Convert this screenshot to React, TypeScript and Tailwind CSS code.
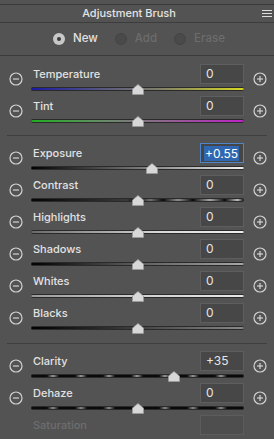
import React from "react"

type Row = {
  label: string
  value: string
  pos: number
  track: string
  selected?: boolean
}

const section1: Row[] = [
  { label: "Temperature", value: "0", pos: 50, track: "bg-[linear-gradient(90deg,#1a1aa6,#5a5a80_35%,#80806a_60%,#d8d820)]" },
  { label: "Tint", value: "0", pos: 50, track: "bg-[linear-gradient(90deg,#1fae1f,#6a8a6a_35%,#8a6a8a_60%,#c020c8)]" },
]

const section2: Row[] = [
  { label: "Exposure", value: "+0.55", pos: 57, track: "bg-[linear-gradient(90deg,#000,#777_50%,#f2f2f2)]", selected: true },
  { label: "Contrast", value: "0", pos: 50, track: "bg-[linear-gradient(90deg,#050505,#3a3a3a_45%,#0a0a0a_50%,#707070_56%,#0a0a0a_62%,#909090_69%,#0a0a0a_76%,#aaaaaa_84%,#0a0a0a_91%,#c0c0c0_97%,#0a0a0a)]" },
  { label: "Highlights", value: "0", pos: 50, track: "bg-[linear-gradient(90deg,#6a6a6a,#d8d8d8_60%,#f0f0f0)]" },
  { label: "Shadows", value: "0", pos: 50, track: "bg-[linear-gradient(90deg,#000,#555_45%,#a8a8a8)]" },
  { label: "Whites", value: "0", pos: 50, track: "bg-[linear-gradient(90deg,#9a9a9a,#d0d0d0_50%,#e8e8e8)]" },
  { label: "Blacks", value: "0", pos: 50, track: "bg-[linear-gradient(90deg,#000,#333_40%,#8a8a8a)]" },
]

const section3: Row[] = [
  { label: "Clarity", value: "+35", pos: 67, track: "bg-[repeating-linear-gradient(90deg,#0a0a0a_0px,#0a0a0a_16px,#9a9a9a_22px,#0a0a0a_28px)]" },
  { label: "Dehaze", value: "0", pos: 50, track: "bg-[repeating-linear-gradient(90deg,#0a0a0a_0px,#0a0a0a_16px,#8a8a8a_22px,#0a0a0a_28px)]" },
]

function CircleIcon({ plus }: { plus?: boolean }) {
  return (
    <svg width="14" height="14" viewBox="0 0 14 14" fill="none" stroke="#d2d2d2" strokeWidth="1.2">
      <circle cx="7" cy="7" r="6" />
      <line x1="4" y1="7" x2="10" y2="7" />
      {plus && <line x1="7" y1="4" x2="7" y2="10" />}
    </svg>
  )
}

function Thumb() {
  return (
    <svg width="12" height="11" viewBox="0 0 12 11">
      <path d="M6 0.5 L11.5 5 L11.5 10.5 L0.5 10.5 L0.5 5 Z" fill="#d8d8d8" stroke="#9a9a9a" strokeWidth="0.8" strokeLinejoin="round" />
    </svg>
  )
}

function SliderRow({ row }: { row: Row }) {
  return (
    <div className="flex h-[32px] items-start">
      <div className="flex w-[31px] justify-center pl-[1px] pt-[8px]">
        <CircleIcon />
      </div>
      <div className="flex w-[213px] flex-col">
        <div className="flex h-[20px] items-center justify-between">
          <span className="pl-[2px] pt-[1px] text-[11px] font-medium text-[#e2e2e2]">{row.label}</span>
          {row.selected ? (
            <div className="flex h-[20px] w-[44px] items-center border border-[#4f86c8] bg-[#454545] pl-[3px]">
              <span className="bg-[#2f68b0] px-[1px] leading-[15px] text-[12px] text-white">{row.value}</span>
            </div>
          ) : (
            <div className="flex h-[20px] w-[44px] items-center border border-[#5e5e5e] bg-[#474747] pl-[5px] text-[12px] text-[#e6e6e6]">
              {row.value}
            </div>
          )}
        </div>
        <div className="relative h-[12px]">
          <div className={`mt-[3px] h-[4px] w-full rounded-[2px] border-y border-[#2a2a2a] ${row.track}`} />
          <div className="absolute top-[0px] -translate-x-1/2" style={{ left: `${row.pos}%` }}>
            <Thumb />
          </div>
        </div>
      </div>
      <div className="flex flex-1 justify-center pl-[2px] pt-[8px]">
        <CircleIcon plus />
      </div>
    </div>
  )
}

function Radio({ label, active }: { label: string; active?: boolean }) {
  return (
    <div className="flex items-center gap-[8px]">
      {active ? (
        <span className="flex h-[12px] w-[12px] items-center justify-center rounded-full bg-[#c8c8c8]">
          <span className="h-[4px] w-[4px] rounded-full bg-[#3a3a3a]" />
        </span>
      ) : (
        <span className="h-[12px] w-[12px] rounded-full border border-[#444] bg-[#4a4a4a]" />
      )}
      <span className={`text-[11.5px] font-medium ${active ? "text-[#e2e2e2]" : "text-[#6c6c6c]"}`}>{label}</span>
    </div>
  )
}

export default function App() {
  return (
    <div
      className="h-[439px] w-[274px] overflow-hidden bg-[#535353]"
      style={{ fontFamily: "Inter, 'Liberation Sans', sans-serif" }}
    >
      <div className="h-[4px]" />
      <div className="h-px bg-[#3c3c3c]" />
      <div className="relative flex h-[17px] items-center justify-center pr-[16px]">
        <span className="text-[11px] font-medium text-[#e4e4e4]">Adjustment Brush</span>
        <div className="absolute right-[2px] top-[5px] flex flex-col gap-[2px]">
          <span className="h-px w-[10px] bg-[#dcdcdc]" />
          <span className="h-px w-[10px] bg-[#dcdcdc]" />
          <span className="h-px w-[10px] bg-[#dcdcdc]" />
        </div>
      </div>
      <div className="h-px bg-[#3c3c3c]" />
      <div className="flex h-[32px] items-center gap-[17px] pl-[53px]">
        <Radio label="New" active />
        <Radio label="Add" />
        <Radio label="Erase" />
      </div>
      <div className="h-px bg-[#3c3c3c]" />

      <div className="pb-[7px] pt-[8px]">
        {section1.map((r) => (
          <SliderRow key={r.label} row={r} />
        ))}
      </div>
      <div className="mx-[7px] h-px bg-[#3f3f3f]" />
      <div className="pb-[8px] pt-[7px]">
        {section2.map((r) => (
          <SliderRow key={r.label} row={r} />
        ))}
      </div>
      <div className="mx-[7px] h-px bg-[#3f3f3f]" />
      <div className="pt-[7px]">
        {section3.map((r) => (
          <SliderRow key={r.label} row={r} />
        ))}
        <div className="flex h-[32px] items-start">
          <div className="w-[31px]" />
          <div className="flex h-[20px] w-[213px] items-center justify-between">
            <span className="pl-[2px] pt-[1px] text-[11px] font-medium text-[#6e6e6e]">Saturation</span>
            <div className="h-[20px] w-[44px] border border-[#5c5c5c] bg-[#4e4e4e]" />
          </div>
        </div>
      </div>
    </div>
  )
}
